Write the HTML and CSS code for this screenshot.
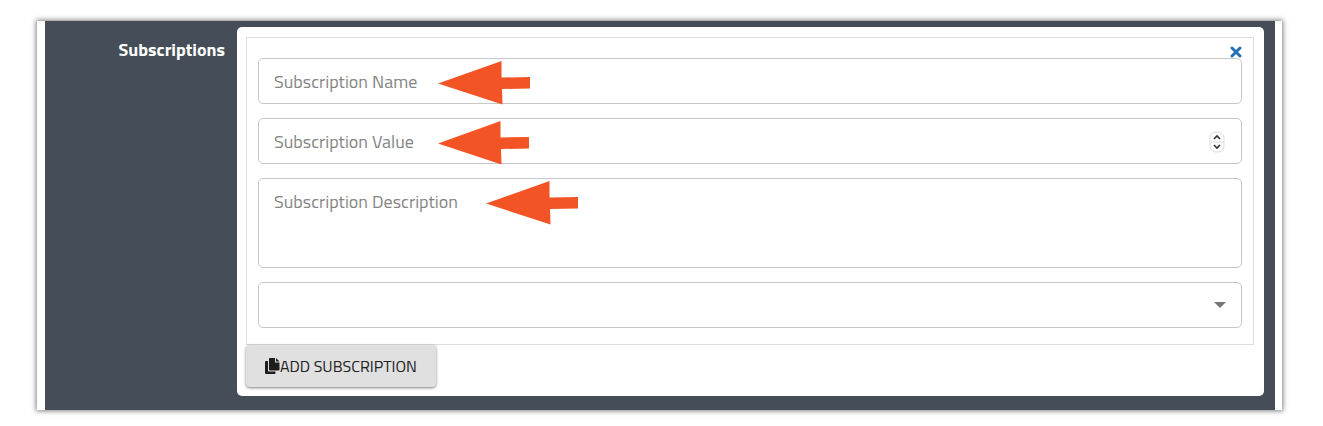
FILE: index.html
```html
<!DOCTYPE html>
<html lang="en">
<head>
<meta charset="utf-8">
<title>Subscriptions</title>
<link rel="stylesheet" href="styles.css">
</head>
<body>
<main class="frame">
  <form class="section">
    <h2 class="section-title">Subscriptions</h2>
    <div class="panel">
      <div class="entry">
        <div class="entry-head">
          <button class="remove" type="button" aria-label="Remove subscription">
            <svg viewBox="0 0 12 12" width="12" height="12"><path d="M2 2L10 10M10 2L2 10" fill="none" stroke="#2670b5" stroke-width="3" stroke-linecap="round"/></svg>
          </button>
        </div>
        <div class="fields">
          <div class="field">
            <input class="control" type="text" placeholder="Subscription Name" aria-label="Subscription Name">
            <svg class="arrow" viewBox="0 0 92 44" width="92" height="44"><path d="M0 22.500L63.500 0V16.500L92 16V27.500L64 28L64.500 43.500Z" fill="#f35426"/></svg>
          </div>
          <div class="field">
            <input class="control" type="number" placeholder="Subscription Value" aria-label="Subscription Value">
            <svg class="arrow" viewBox="0 0 92 44" width="92" height="44"><path d="M0 22.500L62.500 0V16.500L91 16V27.500L63 28L63.500 43.500Z" fill="#f35426"/></svg>
            <svg class="stepper" viewBox="0 0 16 22" width="16" height="22"><rect x="1" y="1" width="14" height="20" rx="6" fill="#fff" stroke="#dcdcdc"/><path d="M1 11H15" stroke="#dcdcdc"/><path d="M5 8L8 5L11 8M5 14L8 17L11 14" fill="none" stroke="#333" stroke-width="1.600"/></svg>
          </div>
          <div class="field">
            <textarea class="control area" placeholder="Subscription Description" aria-label="Subscription Description"></textarea>
            <svg class="arrow arrow-far" viewBox="0 0 92 44" width="92" height="44"><path d="M0 22.500L63.500 0V16.500L92 16V27.500L64 28L64.500 43.500Z" fill="#f35426"/></svg>
          </div>
          <div class="field">
            <select class="control" aria-label="Subscription type"><option></option></select>
            <svg class="caret" viewBox="0 0 12 6" width="12" height="6"><path d="M0 0H12L6 6Z" fill="#777"/></svg>
          </div>
        </div>
      </div>
      <button class="add" type="button">
        <svg viewBox="0 0 15 16" width="15" height="16"><path d="M5 0H10V4.500H14.500V11.500Q14.500 12.500 13.500 12.500H5Q4 12.500 4 11.500V1Q4 0 5 0ZM11 0L14.500 3.500H11ZM1 3H3V12.500Q3 13.500 4 13.500H10.500V15Q10.500 16 9.500 16H1Q0 16 0 15V4Q0 3 1 3Z" fill="#1d1d1d"/></svg>
        <span>ADD SUBSCRIPTION</span>
      </button>
    </div>
  </form>
</main>
</body>
</html>
```
FILE: styles.css
```css
* {
  box-sizing: border-box;
}

body {
  margin: 0;
  padding: 21px 41px 16px 37px;
  background: #fff;
  font-family: "Titillium Web", Roboto, "Liberation Sans", sans-serif;
}

.frame {
  padding: 0 7px 0 8px;
  background: #fff;
  box-shadow: 0 0 5px 1px rgba(0, 0, 0, 0.5);
}

.section {
  display: grid;
  grid-template-columns: 180px 1fr;
  column-gap: 12px;
  padding: 6px 11px 14px 0;
  background: #454d59;
}

.section-title {
  margin: 11px 0 0;
  color: #fff;
  font-size: 18px;
  font-weight: 700;
  line-height: 24px;
  text-align: right;
}

.panel {
  padding: 10px 10px 9px 9px;
  border-radius: 5px;
  background: #fff;
}

.entry {
  padding: 0 11px 16px;
  border: 1px solid #ddd;
}

.entry-head {
  display: flex;
  justify-content: flex-end;
  align-items: flex-end;
  height: 20px;
}

.remove {
  display: flex;
  padding: 0;
  border: 0;
  background: none;
}

.fields {
  display: grid;
  gap: 14px;
}

.field {
  display: flex;
  position: relative;
}

.control {
  flex: 1;
  width: 100%;
  height: 46px;
  margin: 0;
  padding: 10px 15px;
  border: 1px solid #c8c8c8;
  border-radius: 5px;
  background: #fff;
  color: #333;
  font-family: inherit;
  font-size: 18px;
  line-height: 24px;
  appearance: none;
}

.control[type="number"] {
  appearance: textfield;
}

.control::placeholder {
  color: #858585;
  opacity: 1;
}

.area {
  height: 90px;
  padding-top: 11px;
  resize: none;
}

.arrow {
  position: absolute;
  top: 3px;
  left: 180px;
}

.arrow-far {
  left: 228px;
}

.stepper {
  position: absolute;
  top: 13px;
  right: 17px;
}

.caret {
  position: absolute;
  top: 20px;
  right: 16px;
}

.add {
  display: flex;
  align-items: center;
  height: 42px;
  padding: 0 19px;
  border: 0;
  border-radius: 4px;
  background: #e0e0e0;
  box-shadow: 0 1px 3px rgba(0, 0, 0, 0.5);
  color: #222;
  font-family: inherit;
  font-size: 16px;
  line-height: 24px;
}
```
